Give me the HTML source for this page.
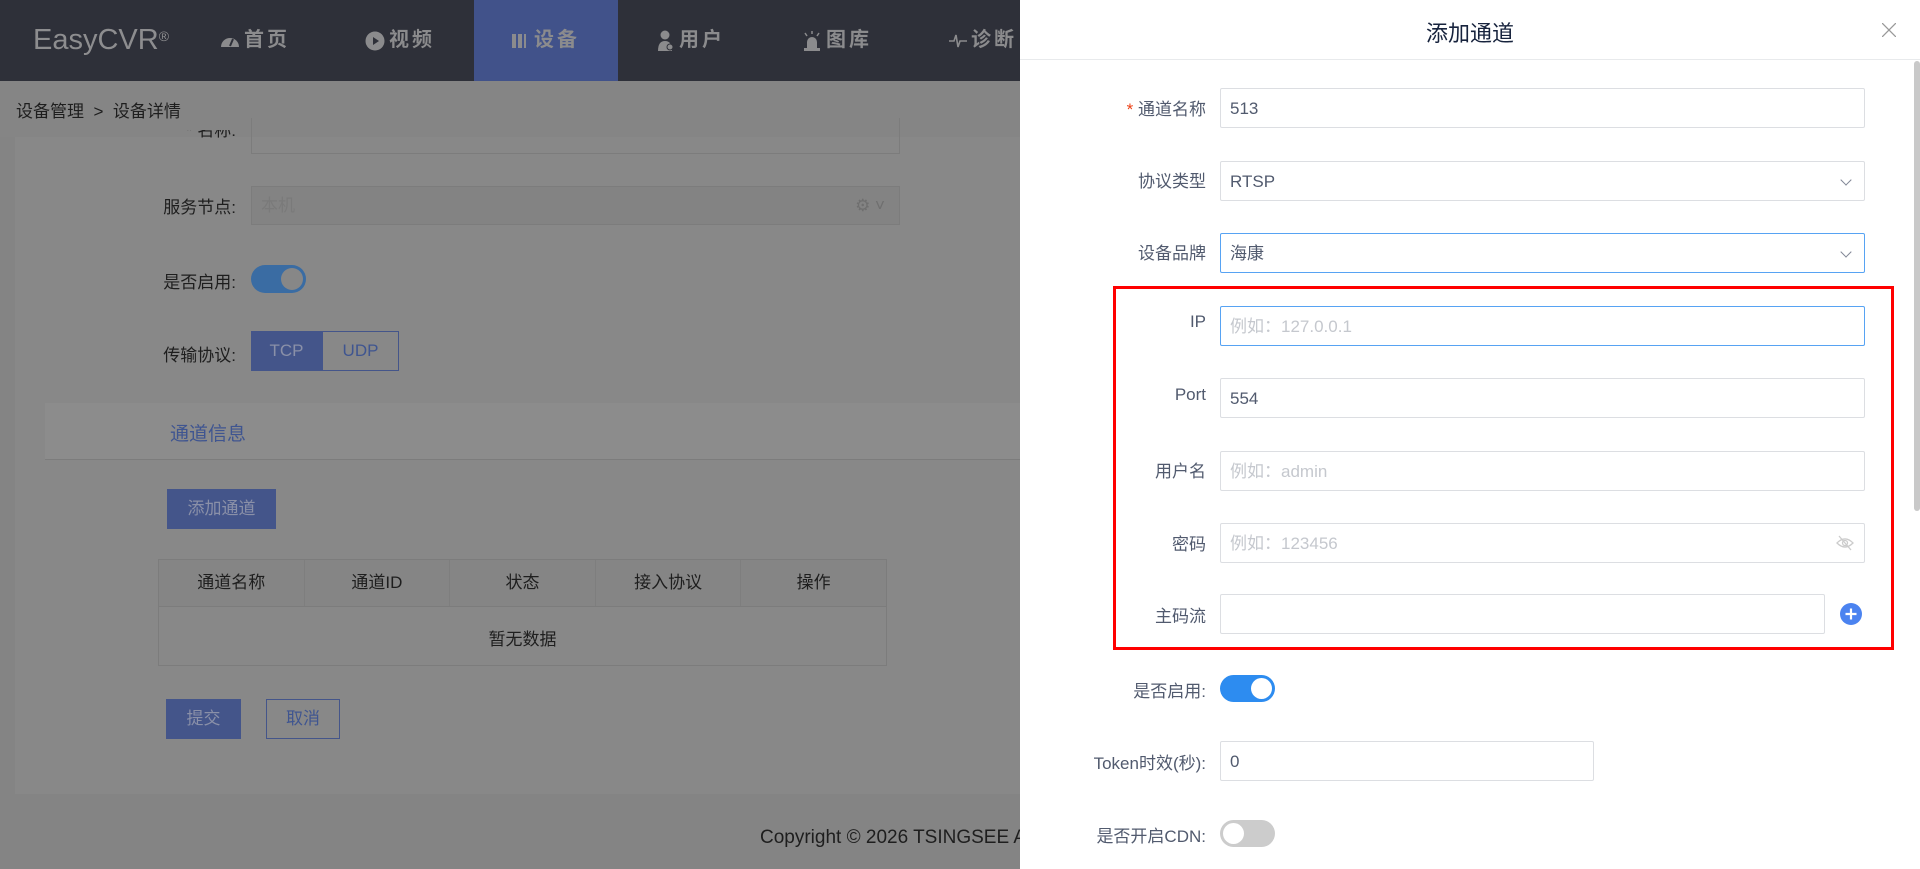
<!DOCTYPE html>
<html><head><meta charset="utf-8"><style>
*{box-sizing:border-box;margin:0;padding:0}
body{width:1920px;height:869px;overflow:hidden;position:relative;background:#848484;font-family:"Liberation Sans","Noto Sans CJK SC",sans-serif;}
.a{position:absolute}
.hdr{left:0;top:0;width:1020px;height:81px;background:#2e3039}
.nav{top:0;height:81px;line-height:81px;color:#8b8b8d;font-size:20px;font-weight:bold;letter-spacing:3px;display:flex;align-items:center}
.nav svg{margin-right:4px}
.lbl{color:#1e1e1e;font-size:17px;text-align:right}
.dr{left:1020px;top:0;width:900px;height:869px;background:#fff}
.fl{position:absolute;left:0;width:186px;text-align:right;color:#515a6e;font-size:17px}
.in{position:absolute;left:200px;width:645px;height:40px;border:1px solid #dcdee2;border-radius:2px;font-size:17px;color:#515a6e;line-height:40px;padding-left:9px}
.ph{color:#c5c8ce}
.chev{position:absolute;right:14px;top:14px;width:8px;height:8px;border-right:1.3px solid #808695;border-bottom:1.3px solid #808695;transform:rotate(45deg)}
</style></head><body>
<div class="a hdr"></div>
<div class="a" style="left:474px;top:0;width:144px;height:81px;background:#41528a"></div>
<div class="a" style="left:33px;top:20px;color:#8d8d8f;font-size:29px;line-height:40px">EasyCVR<sup style="font-size:14px;vertical-align:top;position:relative;top:-4px">®</sup></div>
<div class="a nav" style="left:220px"><svg width="20" height="16" viewBox="0 0 20 16"><path d="M1 14 A9 9 0 0 1 19 14 Z" fill="#8b8b8d"/><path d="M10 13 L13 6" stroke="#2e3039" stroke-width="2"/></svg>首页</div>
<div class="a nav" style="left:365px"><svg width="20" height="20" viewBox="0 0 20 20"><circle cx="10" cy="10" r="9.5" fill="#8b8b8d"/><path d="M8 6 L14 10 L8 14Z" fill="#2e3039"/></svg>视频</div>
<div class="a nav" style="left:512px"><svg width="18" height="16" viewBox="0 0 18 16"><rect x="0" y="1" width="4" height="14" fill="#8b8b8d"/><rect x="6" y="1" width="4" height="14" fill="#8b8b8d"/><rect x="12" y="1" width="2" height="14" fill="#8b8b8d"/></svg>设备</div>
<div class="a nav" style="left:657px"><svg width="18" height="22" viewBox="0 0 18 22"><circle cx="8" cy="5" r="4.5" fill="#8b8b8d"/><path d="M1 21 Q1 11 8 11 Q15 11 15 21Z" fill="#8b8b8d"/><circle cx="13" cy="17" r="3" fill="#8b8b8d" stroke="#2e3039" stroke-width="1"/></svg>用户</div>
<div class="a nav" style="left:802px"><svg width="20" height="22" viewBox="0 0 20 22"><path d="M10 1V4M3 3L5 6M17 3L15 6" stroke="#8b8b8d" stroke-width="1.5"/><path d="M5 18 V12 A5 5 0 0 1 15 12 V18Z" fill="#8b8b8d"/><rect x="2" y="18" width="16" height="3" fill="#8b8b8d"/></svg>图库</div>
<div class="a nav" style="left:949px"><svg width="18" height="16" viewBox="0 0 18 16"><path d="M0 8 H5 L7 2 L9 14 L11 8 H18" fill="none" stroke="#8b8b8d" stroke-width="1.6"/></svg>诊断</div>
<div class="a" style="left:0;top:81px;width:1020px;height:56px;background:#858585"></div>
<div class="a" style="left:16px;top:97px;font-size:17px;color:#1e1e1e">设备管理 &nbsp;&gt;&nbsp; 设备详情</div>
<div class="a" style="left:15px;top:137px;width:1005px;height:657px;background:#888"></div>
<div class="a" style="left:251px;top:118px;width:649px;height:36px;border:1px solid #7c7c7c;border-top:none"></div>
<div class="a lbl" style="left:100px;top:130px;width:136px;height:10px;overflow:hidden;line-height:2px">* 名称:</div>
<div class="a lbl" style="left:100px;top:193px;width:136px">服务节点:</div>
<div class="a" style="left:251px;top:186px;width:649px;height:39px;border:1px solid #7c7c7c;background:#838383;color:#7a7a7a;font-size:17px;line-height:37px;padding-left:9px">本机<span style="position:absolute;right:14px;color:#6f6f6f">⚙ ˅</span></div>
<div class="a lbl" style="left:100px;top:268px;width:136px">是否启用:</div>
<div class="a" style="left:251px;top:265px;width:55px;height:28px;border-radius:14px;background:#3a6ca3"><div class="a" style="right:3px;top:3px;width:22px;height:22px;border-radius:50%;background:#878787"></div></div>
<div class="a lbl" style="left:100px;top:341px;width:136px">传输协议:</div>
<div class="a" style="left:251px;top:331px;width:71px;height:40px;background:#44558a;color:#8a90a8;font-size:17px;line-height:40px;text-align:center">TCP</div>
<div class="a" style="left:322px;top:331px;width:77px;height:40px;border:1px solid #44558a;color:#3f5590;font-size:17px;line-height:38px;text-align:center">UDP</div>
<div class="a" style="left:45px;top:403px;width:975px;height:57px;background:#8c8c8c;border-bottom:1px solid #7c7c7c"></div>
<div class="a" style="left:170px;top:419px;font-size:19px;color:#3f5590">通道信息</div>
<div class="a" style="left:167px;top:489px;width:109px;height:40px;background:#44558a;color:#8a90a8;font-size:17px;line-height:40px;text-align:center">添加通道</div>
<div class="a" style="left:158px;top:559px;width:729px;height:107px;border:1px solid #7c7c7c"></div>
<div class="a" style="left:159px;top:560px;width:727px;height:47px;background:#858585;border-bottom:1px solid #7c7c7c;display:flex;font-size:17px;color:#1e1e1e;line-height:46px;text-align:center">
<div style="flex:1;border-right:1px solid #7e7e7e">通道名称</div><div style="flex:1;border-right:1px solid #7e7e7e">通道ID</div><div style="flex:1;border-right:1px solid #7e7e7e">状态</div><div style="flex:1;border-right:1px solid #7e7e7e">接入协议</div><div style="flex:1">操作</div></div>
<div class="a" style="left:159px;top:625px;width:727px;text-align:center;font-size:17px;color:#1e1e1e">暂无数据</div>
<div class="a" style="left:166px;top:699px;width:75px;height:40px;background:#44558a;color:#8a90a8;font-size:17px;line-height:40px;text-align:center">提交</div>
<div class="a" style="left:266px;top:699px;width:74px;height:40px;border:1px solid #44558a;color:#3f5590;font-size:17px;line-height:38px;text-align:center">取消</div>
<div class="a" style="left:0;top:807px;width:1020px;height:62px;background:#848484"></div>
<div class="a" style="left:760px;top:827px;font-size:19px;color:#1e1e1e;white-space:nowrap;width:260px;overflow:hidden">Copyright © 2026 TSINGSEE AI</div>

<div class="a dr">
<div class="a" style="left:0;top:0;width:900px;height:60px;border-bottom:1px solid #e8eaec"></div>
<div class="a" style="left:0;top:16px;width:900px;text-align:center;font-size:22px;color:#17233d">添加通道</div>
<svg class="a" style="left:862px;top:23px" width="14" height="14"><path d="M0 0L14 14M14 0L0 14" stroke="#999" stroke-width="1.3"/></svg>
<div class="a" style="left:894px;top:61px;width:6px;height:450px;background:#c9c9c9;border-radius:3px"></div>
<div class="a" style="left:93px;top:286px;width:781px;height:364px;border:3px solid #f00"></div>

<div class="fl" style="top:95px"><span style="color:#ed4014">* </span>通道名称</div>
<div class="in" style="top:88px">513</div>
<div class="fl" style="top:167px">协议类型</div>
<div class="in" style="top:161px">RTSP<i class="chev"></i></div>
<div class="fl" style="top:239px">设备品牌</div>
<div class="in" style="top:233px;border-color:#57a3f3">海康<i class="chev"></i></div>
<div class="fl" style="top:312px">IP</div>
<div class="in ph" style="top:306px;border-color:#57a3f3">例如：127.0.0.1</div>
<div class="fl" style="top:385px">Port</div>
<div class="in" style="top:378px">554</div>
<div class="fl" style="top:457px">用户名</div>
<div class="in ph" style="top:451px">例如：admin</div>
<div class="fl" style="top:530px">密码</div>
<div class="in ph" style="top:523px">例如：123456
<svg class="a" style="right:10px;top:11px" width="18" height="16" viewBox="0 0 18 16"><path d="M1 8 Q9 0 17 8 Q9 16 1 8Z" fill="none" stroke="#ccc" stroke-width="1.3"/><circle cx="9" cy="8" r="2.5" fill="none" stroke="#ccc" stroke-width="1.3"/><path d="M3 1 L15 15" stroke="#ccc" stroke-width="1.3"/></svg></div>
<div class="fl" style="top:602px">主码流</div>
<div class="in" style="top:594px;width:605px"></div>
<svg class="a" style="left:820px;top:603px" width="22" height="22"><circle cx="11" cy="11" r="11" fill="#4b83f0"/><path d="M11 5.5V16.5M5.5 11H16.5" stroke="#fff" stroke-width="2.2"/></svg>
<div class="fl" style="top:677px">是否启用:</div>
<div class="a" style="left:200px;top:675px;width:55px;height:27px;border-radius:14px;background:#2d8cf0"><div class="a" style="right:3px;top:3px;width:21px;height:21px;border-radius:50%;background:#fff"></div></div>
<div class="fl" style="top:749px">Token时效(秒):</div>
<div class="in" style="top:741px;width:374px">0</div>
<div class="fl" style="top:822px">是否开启CDN:</div>
<div class="a" style="left:200px;top:820px;width:55px;height:27px;border-radius:14px;background:#ccc"><div class="a" style="left:3px;top:3px;width:21px;height:21px;border-radius:50%;background:#fff"></div></div>
</div>
</body></html>
